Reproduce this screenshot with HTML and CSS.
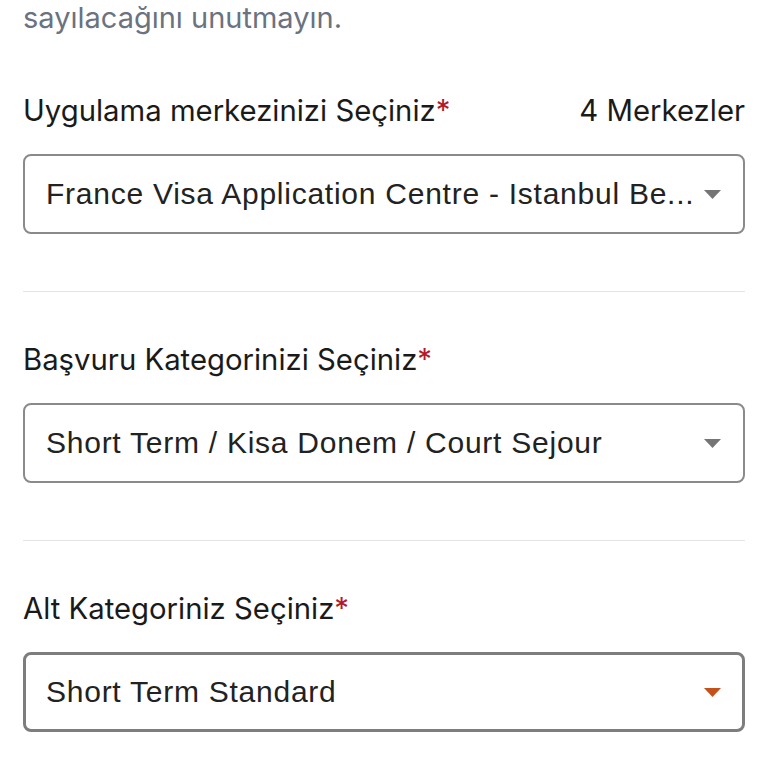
FILE: index.html
```html
<!DOCTYPE html>
<html lang="tr">
<head>
<meta charset="utf-8">
<link rel="stylesheet" href="styles.css">
</head>
<body>
<div class="page">
  <p class="note">sayılacağını unutmayın.</p>

  <section class="field first">
    <div class="label-row">
      <span class="label">Uygulama merkezinizi Seçiniz<span class="req">*</span></span>
      <span class="count">4 Merkezler</span>
    </div>
    <div class="select">
      <span class="value">France Visa Application Centre - Istanbul Be...</span>
      <svg class="caret" width="17" height="9" viewBox="0 0 17 9"><path d="M0 0 H17 L8.5 9 Z" fill="#757575"/></svg>
    </div>
  </section>

  <hr class="divider">

  <section class="field">
    <div class="label-row">
      <span class="label">Başvuru Kategorinizi Seçiniz<span class="req">*</span></span>
    </div>
    <div class="select">
      <span class="value">Short Term / Kisa Donem / Court Sejour</span>
      <svg class="caret" width="17" height="9" viewBox="0 0 17 9"><path d="M0 0 H17 L8.5 9 Z" fill="#757575"/></svg>
    </div>
  </section>

  <hr class="divider">

  <section class="field">
    <div class="label-row">
      <span class="label">Alt Kategoriniz Seçiniz<span class="req">*</span></span>
    </div>
    <div class="select focused">
      <span class="value">Short Term Standard</span>
      <svg class="caret" width="17" height="9" viewBox="0 0 17 9"><path d="M0 0 H17 L8.5 9 Z" fill="#c4501a"/></svg>
    </div>
  </section>
</div>
</body>
</html>
```

FILE: styles.css
```css
html, body {
  margin: 0;
  padding: 0;
  background: #ffffff;
}

.page {
  padding: 0 23px;
  font-family: Inter, "Noto Sans", sans-serif;
  color: #1a1a1a;
}

.note {
  margin: 0;
  font-size: 29px;
  line-height: 35px;
  color: #6b7280;
}

.field.first {
  margin-top: 60px;
}

.label-row {
  display: flex;
  justify-content: space-between;
  align-items: baseline;
  font-size: 29.3px;
  line-height: 32px;
  margin-bottom: 27px;
}

.req {
  color: #b3192b;
}

.select {
  box-sizing: border-box;
  height: 80px;
  border: 2px solid #8a8a8a;
  border-radius: 8px;
  display: flex;
  align-items: center;
  padding: 0 22px 0 21px;
  font-family: "Liberation Sans", Arial, sans-serif;
  font-size: 30px;
  letter-spacing: 0.75px;
  color: #222222;
}

.select.focused {
  border: 3px solid #7d7d7d;
  padding: 0 21px 0 20px;
}

.value {
  flex: 1;
  white-space: nowrap;
  overflow: hidden;
}

.caret {
  flex: none;
  margin-left: 10px;
}

.divider {
  border: 0;
  border-top: 1px solid #e3e3e3;
  margin: 57px 0 52px;
}
```
